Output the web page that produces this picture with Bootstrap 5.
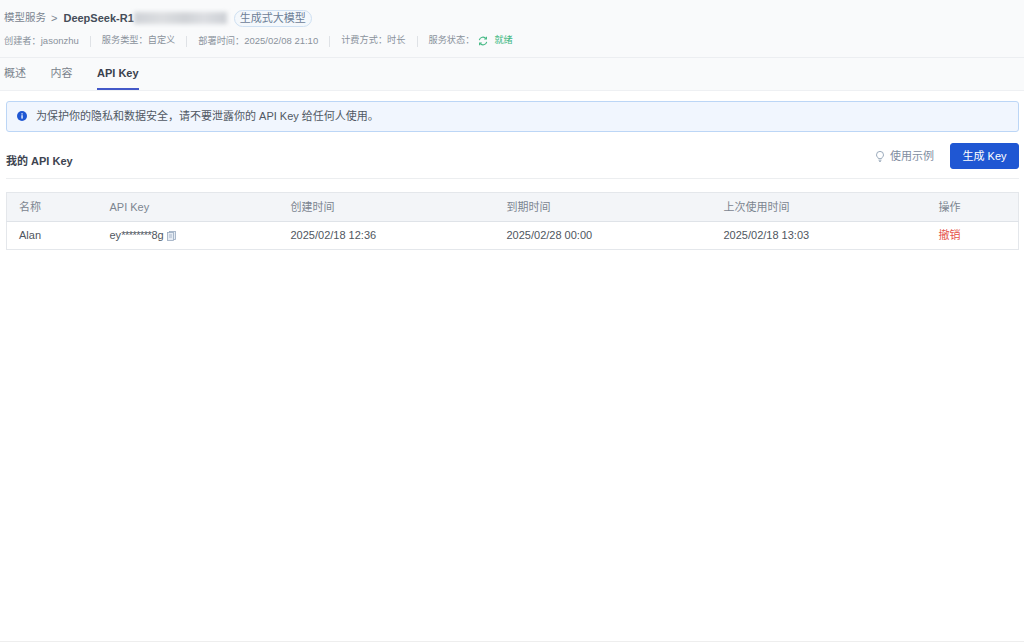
<!DOCTYPE html>
<html lang="zh">
<head>
<meta charset="utf-8">
<title>API Key</title>
<link href="https://cdn.jsdelivr.net/npm/bootstrap@5.3.0/dist/css/bootstrap.min.css" rel="stylesheet">
<style>
html,body{height:100%}
body{font-family:"Liberation Sans","Noto Sans CJK SC",sans-serif;font-size:11px;color:#3b4350;background:#fff;border-bottom:1px solid #eee;overflow:hidden}
.top-area{background:#f9fafb;height:91px;border-bottom:1px solid #eef0f3}
.head-block{height:58px;border-bottom:1px solid #eceef1;padding:9px 4px 0}
.crumb{height:18px;font-size:10.5px;color:#7a8490}
.crumb b{color:#454d59;font-size:11px}
.crumb-arrow{font-size:11px;margin:0 6px 0 5px}
.blurred{width:93px;height:12px;margin-right:7px;filter:blur(2px);background:linear-gradient(90deg,#cfd2d7,#dcdee1 30%,#d0d3d7 55%,#dcdee2 75%,#cdd0d5);}
.tag-pill{height:17px;padding:0 5px;border:1px solid #cfe0f2;border-radius:9px;background:#f4f8fc;color:#6d8097;font-size:11px;line-height:15px}
.meta-row{margin-top:7px;font-size:9.2px;color:#8a929c;height:14px}
.meta-row .meta-sep{width:1px;height:11px;background:#dfe2e6;margin:0 11px}
.meta-num{font-size:9.5px}
.ready{color:#42b883;margin-left:2px}
.tab-row{height:32px;padding-left:4px;gap:24.5px;font-size:11px;color:#7a828c}
.tab-item{height:32px;line-height:31px}
.tab-on{color:#39414d;font-weight:700;border-bottom:2px solid #4358c8;}
.notice{margin:10px 5px 0 6px;height:31px;background:#f1f6fe;border:1px solid #bcd6f6;border-radius:3px;padding:0 0 1px 10px;color:#505863;font-size:11px;gap:9px}
.sec-head{margin:11px 5px 0 6px;height:36px;border-bottom:1px solid #eceef0}
.sec-title{font-weight:700;font-size:11px;color:#3d4450;margin-top:10px}
.demo-link{color:#7f8d9f;font-size:11px;gap:5px;margin-right:16px}
.gen-btn{--bs-btn-padding-x:0;--bs-btn-padding-y:0;--bs-btn-font-size:11px;--bs-btn-bg:#1f57d3;--bs-btn-border-color:#1f57d3;--bs-btn-border-radius:3px;width:69px;height:26px}
.key-table{margin:13px 5px 0 6px;width:1013px;border:1px solid #e4e7eb;table-layout:fixed;font-size:11px}
.key-table th,.key-table td{padding:0 0 0 12px;vertical-align:middle;border:0}
.key-table th{height:29px;background:#f3f5f8;color:#7c8590;font-weight:400;border-bottom:1px solid #dfe3e8}
.key-table td{height:28px;color:#4f5660}
.key-table .danger-txt{color:#e5534b}
.mask-stars{letter-spacing:-.5px}
</style>
</head>
<body>
<div class="top-area">
  <div class="head-block">
    <div class="crumb d-flex align-items-center">
      <span>模型服务</span><span class="crumb-arrow">&gt;</span><b>DeepSeek-R1</b><span class="blurred"></span><span class="tag-pill">生成式大模型</span>
    </div>
    <div class="meta-row d-flex align-items-center">
      <span>创建者：<span class="meta-num">jasonzhu</span></span><span class="meta-sep"></span>
      <span>服务类型：自定义</span><span class="meta-sep"></span>
      <span>部署时间：<span class="meta-num">2025/02/08 21:10</span></span><span class="meta-sep"></span>
      <span>计费方式：时长</span><span class="meta-sep"></span>
      <span>服务状态：</span>
      <svg class="mx-1" width="10" height="10" viewBox="0 0 10 10" fill="none" stroke="#42b883" stroke-width="1.1"><path d="M1.3 4.2A3.8 3.8 0 0 1 8 2.6M8.7 5.8A3.8 3.8 0 0 1 2 7.4"/><path d="M8.4 .8V3H6.2M1.6 9.2V7H3.8"/></svg>
      <span class="ready">就绪</span>
    </div>
  </div>
  <div class="tab-row d-flex">
    <span class="tab-item">概述</span><span class="tab-item">内容</span><span class="tab-item tab-on">API Key</span>
  </div>
</div>
<div class="notice d-flex align-items-center">
  <svg width="10" height="10" viewBox="0 0 10 10"><circle cx="5" cy="5" r="5" fill="#1f57d3"/><rect x="4.4" y="4.2" width="1.3" height="3.4" fill="#fff"/><rect x="4.4" y="2.3" width="1.3" height="1.2" fill="#fff"/></svg>
  <span>为保护你的隐私和数据安全，请不要泄露你的 API Key 给任何人使用。</span>
</div>
<div class="sec-head d-flex align-items-start justify-content-between">
  <span class="sec-title">我的 API Key</span>
  <div class="d-flex align-items-center">
    <span class="demo-link d-flex align-items-center">
      <svg width="10" height="11" viewBox="0 0 10 11" fill="none" stroke="#8fa0b3" stroke-width=".9"><path d="M3.4 7.6C3.2 6.4 1.5 5.8 1.5 3.9a3.5 3.5 0 0 1 7 0c0 1.9-1.7 2.5-1.9 3.7z"/><path d="M3.6 9.2h2.8M4.2 10.5h1.6"/></svg>
      <span>使用示例</span>
    </span>
    <button type="button" class="btn btn-primary gen-btn">生成 Key</button>
  </div>
</div>
<table class="table key-table mb-0">
  <colgroup><col style="width:91px"><col style="width:181px"><col style="width:216px"><col style="width:217px"><col style="width:215px"><col></colgroup>
  <thead><tr><th>名称</th><th>API Key</th><th>创建时间</th><th>到期时间</th><th>上次使用时间</th><th>操作</th></tr></thead>
  <tbody><tr>
    <td>Alan</td>
    <td>ey<span class="mask-stars">********</span>8g <svg class="align-text-bottom" width="9" height="10" viewBox="0 0 9 10" fill="#e6ecf4" stroke="#9aabc0" stroke-width=".8"><rect x="2.5" y=".5" width="6" height="8"/><rect x=".5" y="1.5" width="6" height="8"/><path d="M2 4h3M2 6h3" fill="none"/></svg></td>
    <td>2025/02/18 12:36</td><td>2025/02/28 00:00</td><td>2025/02/18 13:03</td><td class="danger-txt">撤销</td>
  </tr></tbody>
</table>
</body>
</html>
